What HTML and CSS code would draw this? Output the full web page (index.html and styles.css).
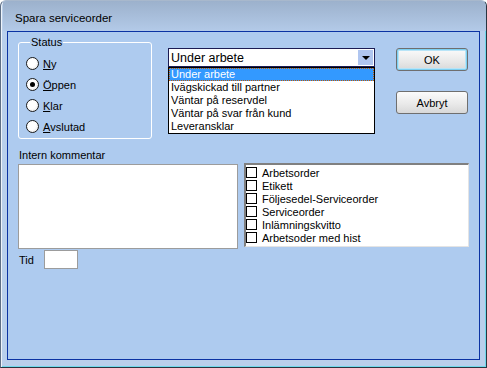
FILE: index.html
```html
<!DOCTYPE html>
<html>
<head>
    <title>Spara serviceorder</title>
    <link rel="stylesheet" href="styles.css">
</head>
<body>
    <div class="window">
        <div class="titlebar">Spara serviceorder</div>
        <div class="frame">
            <div class="panel">
                <div class="top-row">
                    <!-- Status -->
                    <fieldset class="status">
                        <legend>Status</legend>
                        <div class="radio"><span class="dot"></span><u>N</u>y</div>
                        <div class="radio"><span class="dot checked"></span><u>Ö</u>ppen</div>
                        <div class="radio"><span class="dot"></span><u>K</u>lar</div>
                        <div class="radio"><span class="dot"></span><u>A</u>vslutad</div>
                    </fieldset>

                    <!-- Combo med öppen lista -->
                    <div class="combo-wrap">
                        <div class="combo">
                            <span class="combo-text">Under arbete</span>
                            <span class="combo-btn"><span class="arrow"></span></span>
                        </div>
                        <ul class="dropdown">
                            <li class="selected">Under arbete</li>
                            <li>Ivägskickad till partner</li>
                            <li>Väntar på reservdel</li>
                            <li>Väntar på svar från kund</li>
                            <li>Leveransklar</li>
                        </ul>
                    </div>

                    <div class="buttons">
                        <button class="btn default">OK</button>
                        <button class="btn">Avbryt</button>
                    </div>
                </div>

                <div class="label">Intern kommentar</div>
                <div class="mid-row">
                    <div class="textarea"></div>
                    <div class="listbox">
                        <div class="check"><span class="box"></span>Arbetsorder</div>
                        <div class="check"><span class="box"></span>Etikett</div>
                        <div class="check"><span class="box"></span>Följesedel-Serviceorder</div>
                        <div class="check"><span class="box"></span>Serviceorder</div>
                        <div class="check"><span class="box"></span>Inlämningskvitto</div>
                        <div class="check"><span class="box"></span>Arbetsoder med hist</div>
                    </div>
                </div>
                <div class="tid-row">
                    <span class="tid-label">Tid</span>
                    <div class="tid-input"></div>
                </div>
            </div>
        </div>
    </div>
</body>
</html>
```

FILE: styles.css
```css
body {
    margin: 0;
    font-family: "Liberation Sans", Arial, sans-serif;
    font-size: 11px;
    color: #000;
    background: #fff;
}
.window {
    width: 487px;
    height: 368px;
    box-sizing: border-box;
    display: flex;
    flex-direction: column;
    background: #b9cfeb;
    border-left: 1px solid #5f6f85;
    border-right: 1px solid #2a3440;
    border-bottom: 1px solid #2a3440;
    border-top: 1px solid #a8b8cc;
    border-radius: 6px 6px 0 0;
    box-shadow: inset 1px 0 0 #eef3fa, inset -1px -1px 0 #6fd8ea;
    overflow: hidden;
}
.titlebar {
    height: 30px;
    box-sizing: border-box;
    padding: 10px 0 0 12px;
    font-size: 11.5px;
    line-height: 14px;
    background: linear-gradient(#9cb1cc, #b3cae8);
    margin-left: 2px;
}
.frame {
    flex: 1;
    display: flex;
    padding: 0 6px 7px 6px;
}
.panel {
    flex: 1;
    border: 1px solid #0b33a3;
    background: #aecbef;
    padding: 4px 0 0 10px;
}
.top-row {
    display: flex;
    align-items: flex-start;
}

/* Status */
.status {
    width: 134px;
    box-sizing: border-box;
    margin: 0;
    padding: 4px 0 1px 7px;
    border: 1px solid #fff;
    border-radius: 3px;
}
.status legend {
    padding: 0 1px;
    margin-left: 4px;
    line-height: 13px;
}
.radio {
    height: 21px;
    display: flex;
    align-items: center;
}
.radio u {
    margin-left: 4px;
}
.dot {
    width: 13px;
    height: 13px;
    box-sizing: border-box;
    border: 1px solid #1b1b1b;
    border-radius: 50%;
    background: radial-gradient(circle at 40% 40%, #fff 45%, #dedede);
    position: relative;
}
.dot.checked::after {
    content: "";
    position: absolute;
    left: 3px;
    top: 3px;
    width: 5px;
    height: 5px;
    border-radius: 50%;
    background: #000;
}

/* Combo */
.combo-wrap {
    position: relative;
    margin: 12px 0 0 16px;
    width: 207px;
}
.combo {
    height: 19px;
    box-sizing: border-box;
    border: 1px solid #1c1c54;
    background: #fff;
    display: flex;
    align-items: center;
    justify-content: space-between;
    padding: 0 1px 0 2px;
    font-size: 12.5px;
}
.combo-btn {
    width: 15px;
    height: 15px;
    background: #b0c6f0;
    display: flex;
    align-items: center;
    justify-content: center;
}
.arrow {
    width: 0;
    height: 0;
    border-left: 4px solid transparent;
    border-right: 4px solid transparent;
    border-top: 4px solid #000;
}
.dropdown {
    position: absolute;
    left: 0;
    top: 19px;
    width: 207px;
    box-sizing: border-box;
    margin: 0;
    padding: 0;
    list-style: none;
    border: 1px solid #000;
    background: #fff;
    z-index: 10;
}
.dropdown li {
    height: 13px;
    line-height: 13px;
    padding-left: 2px;
}
.dropdown li.selected {
    background: #3399ff;
    color: #fff;
    outline: 1px dotted #c35a00;
    outline-offset: -1px;
}

/* Knappar */
.buttons {
    display: flex;
    flex-direction: column;
    gap: 20px;
    margin: 12px 0 0 21px;
}
.btn {
    width: 72px;
    height: 23px;
    font-family: "Liberation Sans", Arial, sans-serif;
    font-size: 11px;
    font-weight: normal;
    color: #000;
    border: 1px solid #6f6f6f;
    border-radius: 3px;
    background: linear-gradient(#fbfbfb, #e8e8e8 60%, #d8d8d8);
    padding: 0;
}
.btn.default {
    box-shadow: inset 0 0 0 1px #7dd0f2, inset 0 0 0 2px #b8e4f7;
}

/* Kommentar + utskrifter */
.label {
    margin: 10px 0 2px 1px;
    line-height: 13px;
}
.mid-row {
    display: flex;
    align-items: flex-start;
}
.textarea {
    width: 220px;
    height: 85px;
    box-sizing: border-box;
    border: 1px solid #9c9c9c;
    background: #fff;
}
.listbox {
    width: 225px;
    height: 84px;
    box-sizing: border-box;
    margin: -1px 0 0 6px;
    border-style: solid;
    border-width: 2px 1px 1px 2px;
    border-color: #808080 #e4e4e4 #e4e4e4 #808080;
    background: #fff;
    padding-top: 1px;
}
.check {
    height: 13px;
    display: flex;
    align-items: center;
    white-space: nowrap;
}
.box {
    width: 11px;
    height: 11px;
    box-sizing: border-box;
    border: 1px solid #000;
    background: #fff;
    margin-right: 5px;
}
.tid-row {
    display: flex;
    align-items: center;
    margin-top: 1px;
}
.tid-label {
    width: 25px;
    padding-left: 1px;
}
.tid-input {
    width: 34px;
    height: 19px;
    box-sizing: border-box;
    border: 1px solid #9c9c9c;
    background: #fff;
}
```
